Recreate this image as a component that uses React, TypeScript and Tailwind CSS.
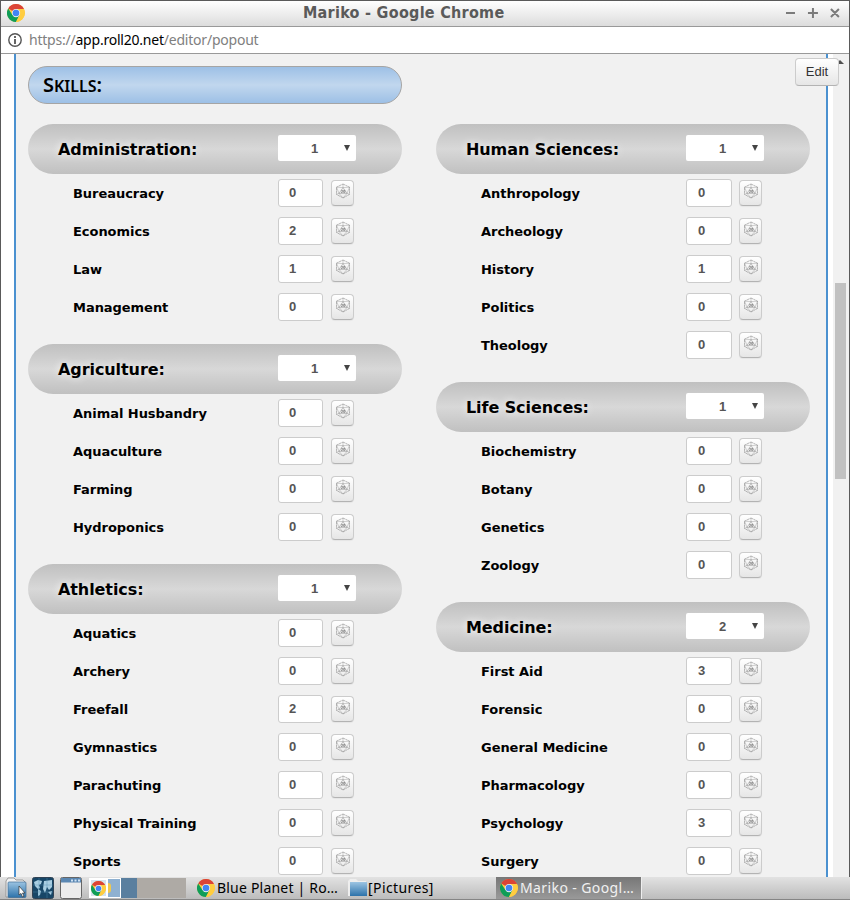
import React from "react";

type Skill = [string, number];
type Group = { name: string; level: number; skills: Skill[] };

const left: Group[] = [
  { name: "Administration:", level: 1, skills: [["Bureaucracy", 0], ["Economics", 2], ["Law", 1], ["Management", 0]] },
  { name: "Agriculture:", level: 1, skills: [["Animal Husbandry", 0], ["Aquaculture", 0], ["Farming", 0], ["Hydroponics", 0]] },
  {
    name: "Athletics:",
    level: 1,
    skills: [["Aquatics", 0], ["Archery", 0], ["Freefall", 2], ["Gymnastics", 0], ["Parachuting", 0], ["Physical Training", 0], ["Sports", 0]],
  },
];

const right: Group[] = [
  { name: "Human Sciences:", level: 1, skills: [["Anthropology", 0], ["Archeology", 0], ["History", 1], ["Politics", 0], ["Theology", 0]] },
  { name: "Life Sciences:", level: 1, skills: [["Biochemistry", 0], ["Botany", 0], ["Genetics", 0], ["Zoology", 0]] },
  {
    name: "Medicine:",
    level: 2,
    skills: [["First Aid", 3], ["Forensic", 0], ["General Medicine", 0], ["Pharmacology", 0], ["Psychology", 3], ["Surgery", 0]],
  },
];

function Chrome({ size = 18 }: { size?: number }) {
  return (
    <svg width={size} height={size} viewBox="0 0 48 48" className="block shrink-0">
      <circle cx="24" cy="24" r="24" fill="#ffcd40" />
      <path d="M24 24 3.2 12A24 24 0 0 1 44.8 12L44.8 13H24Z" fill="#db4437" />
      <path d="M3.2 12A24 24 0 0 0 24 48L33.5 29.5 24 24 14.5 29.5Z" fill="#0f9d58" />
      <path d="M24 13H44.8A24 24 0 0 1 24 48L33.5 29.5Z" fill="#ffcd40" />
      <circle cx="24" cy="24" r="11" fill="#f1f1f1" />
      <circle cx="24" cy="24" r="8.8" fill="#4285f4" />
    </svg>
  );
}

function D20() {
  return (
    <svg width="16" height="16" viewBox="0 0 16 16" className="block" fill="none" stroke="#8a8a8a" strokeWidth="0.6">
      <path d="M8 1 14.5 4.2V11.4L8 15 1.5 11.4V4.2Z" strokeDasharray="2.4 .4" />
      <path d="M8 1V4.6M14.5 4.2 8 4.6 1.5 4.2M1.5 4.2 4 10.4M14.5 4.2 12 10.4M1.5 11.4 4 10.4 8 15 12 10.4 14.5 11.4" strokeWidth=".4" />
      <path d="M8 4.6 4 10.4H12Z" strokeWidth=".5" />
      <path d="M6.2 7.4h1.3v1L6.2 9.4h1.4M8.6 7.4h1.3v2H8.6Z" stroke="#666" strokeWidth=".6" />
    </svg>
  );
}

function GroupBlock({ group, wide }: { group: Group; wide: boolean }) {
  return (
    <section className="mb-[18px]">
      <header className="flex h-[50px] items-center rounded-[25px] bg-[linear-gradient(#c0c0c0,#d8d8d8_50%,#c0c0c0)] pl-[30px]">
        <h2 className="w-[220px] pt-[2px] text-[16px] leading-[20px] font-bold tracking-[-0.08px] [text-shadow:0_0_8px_#fff]">{group.name}</h2>
        <div className="mb-[2px] flex h-[26px] w-[78px] items-center rounded-[2px] bg-white font-['Liberation_Sans',sans-serif] text-[13px] font-bold text-[#555]">
          <span className="ml-[33px] w-[7px] pt-[2px]">{group.level}</span>
          <svg width="6" height="6" viewBox="0 0 6 6" className="ml-[26px]">
            <path d="M0 0H6L3 6Z" fill="#444" />
          </svg>
        </div>
      </header>
      {group.skills.map(([name, value]) => (
        <div key={name} className="flex h-[38px] items-center pl-[45px]">
          <span className="w-[205px] pt-[2px] text-[13px] font-bold tracking-[-0.04px]">{name}</span>
          <span
            className={
              "flex h-[28px] items-center rounded-[3px] border border-[#ccc] bg-white font-['Liberation_Sans',sans-serif] text-[13px] font-bold text-[#555] " +
              (wide ? "mr-[7px] w-[46px] pl-[11px]" : "mr-[8px] w-[45px] pl-[10px]")
            }
          >
            {value}
          </span>
          <button className="flex h-[26px] w-[23px] items-start justify-center rounded-[4px] border border-[#ccc] border-b-[#b3b3b3] bg-[linear-gradient(#fff,#e6e6e6)] pt-[2px] shadow-[0_1px_1px_rgba(0,0,0,0.05)]">
            <D20 />
          </button>
        </div>
      ))}
    </section>
  );
}

function FolderIcon() {
  return (
    <svg width="22" height="22" viewBox="0 0 22 22" className="block shrink-0">
      <defs>
        <linearGradient id="folder" x1="0" y1="0" x2="0" y2="1">
          <stop offset="0" stopColor="#9cc4e2" />
          <stop offset="1" stopColor="#2c72aa" />
        </linearGradient>
      </defs>
      <path d="M1 20V4L3 1H9L11 3H18L20 5V20Z" fill="#f2f2f2" stroke="#888" strokeWidth=".8" />
      <rect x="3" y="5" width="18" height="15.5" rx="1" fill="url(#folder)" stroke="#416f95" strokeWidth=".7" />
      <path d="M14 9V18L16 16.4 17.5 20 19 19.3 17.5 16H20Z" fill="#fff" stroke="#333" strokeWidth=".7" />
    </svg>
  );
}

export default function App() {
  return (
    <div className="flex h-[900px] w-[850px] flex-col overflow-hidden bg-white font-['DejaVu_Sans',sans-serif] text-black">
      <div className="flex h-[877px] flex-col overflow-hidden border border-b-0 border-[#5a5a5a]">
        <div className="flex h-[26px] shrink-0 items-center border-b border-[#999] bg-[linear-gradient(#fff,#dcdcdc)] pr-[8px] pb-[2px] pl-[6px]">
          <Chrome />
          <div className="ml-[278px] w-[483px] font-['DejaVu_Sans_Condensed','DejaVu_Sans',sans-serif] text-[16px] leading-[20px] font-bold tracking-[0.28px] [font-stretch:condensed] whitespace-nowrap text-[#5a5a5a]">
            Mariko - Google Chrome
          </div>
          <svg width="56" height="12" viewBox="0 0 56 12" stroke="#7b7b7b" strokeWidth="2" fill="none">
            <path d="M1 6H10M23 6H33M28 1V11M46 2 54 10M54 2 46 10" />
          </svg>
        </div>
        <div className="flex h-[27px] shrink-0 items-center border-b border-[#999] bg-white pl-[7px]">
          <svg width="14" height="14" viewBox="0 0 14 14" fill="none" stroke="#555">
            <circle cx="7" cy="7" r="6.2" strokeWidth="1.4" />
            <path d="M7 6V11M7 3V5" strokeWidth="1.8" />
          </svg>
          <span className="ml-[7px] font-['Noto_Sans',sans-serif] text-[14px] leading-[20px] tracking-[-0.22px] text-[#808080]">
            https://<span className="text-black">app.roll20.net</span>/editor/popout
          </span>
        </div>
        <div className="relative flex h-[823px] overflow-hidden bg-white pl-[13px]">
          <main className="w-[814px] shrink-0 border-x-2 border-[#4b91d0] bg-[#f1f1f1] pt-[12px] pl-[12px]">
            <h1 className="mb-[20px] flex h-[38px] w-[374px] items-center rounded-[19px] border border-[#a5a5a5] bg-[linear-gradient(#9dc0e6,#c1d7ee_50%,#9dc0e6)] pl-[14px] font-['Noto_Sans',sans-serif] text-[20px] font-semibold">
              <span>
                S<span className="text-[16px]">KILLS</span>:
              </span>
            </h1>
            <div className="flex gap-[34px]">
              {[left, right].map((groups, i) => (
                <div key={i} className="w-[374px]">
                  {groups.map((g) => (
                    <GroupBlock key={g.name} group={g} wide={i === 1} />
                  ))}
                </div>
              ))}
            </div>
          </main>
          <aside className="ml-[5px] h-full w-[16px] bg-[#f1f1f1] pt-[229px] pl-[2px]">
            <div className="h-[196px] w-[11px] bg-[#c1c1c1]" />
          </aside>
          <svg width="6" height="4" viewBox="0 0 6 4" className="absolute top-[6px] left-[837px]">
            <path d="M0 4V2L2 0 6 4Z" fill="#505050" />
          </svg>
          <button className="absolute top-[4px] left-[794px] h-[28px] w-[44px] rounded-[4px] border border-[#ccc] border-b-[#b3b3b3] bg-[linear-gradient(#fff,#e6e6e6)] font-['Liberation_Sans',sans-serif] text-[13px] text-[#333]">
            Edit
          </button>
        </div>
      </div>
      <footer className="flex h-[23px] shrink-0 items-center border-b border-[#858585] bg-[linear-gradient(#e2e2e2,#bcbcbc)] pl-[5px] font-['Noto_Sans',sans-serif] text-[14px] leading-[20px] whitespace-nowrap">
        <FolderIcon />
        <svg width="22" height="22" viewBox="0 0 22 22" className="ml-[5px] shrink-0">
          <rect x=".5" y=".5" width="21" height="21" rx="2" fill="#174667" stroke="#304254" />
          <path d="M2 5 6 3 10 4 9 7 7 8 8 11 6 12 3 9ZM6 12 9 14 8 18 6 19ZM12 4 20 3 20 10 17 13 15 10 13 16 11 12ZM16 15 20 14 19 18Z" fill="#a9cee2" />
          <path d="M1 8H21M1 15H21M7 1V21M15 1V21" stroke="#5991b1" strokeWidth=".4" />
        </svg>
        <svg width="22" height="22" viewBox="0 0 22 22" className="ml-[6px] shrink-0">
          <rect x=".5" y=".5" width="21" height="21" rx="2" fill="#ececec" stroke="#666" />
          <path d="M1 1H21V5.5H1Z" fill="#5a87b2" />
          <path d="M11 3.5H13M14.5 3.5H16.5M18 3.5H20" stroke="#cfe2f3" strokeWidth="2" />
        </svg>
        <div className="ml-[7px] flex h-[20px] w-[97px] shrink-0">
          <div className="relative flex w-[48px] bg-[#5a7f9f]">
            <div className="flex w-[19px] items-center border-2 border-white bg-[#d5e2ee]">
              <Chrome size={15} />
            </div>
            <div className="flex w-[13px] items-center overflow-hidden border border-l-0 border-white bg-[#8fb1d1]">
              <div className="h-[10px] w-[3px] rounded-r-full bg-[#f2c94c]" />
            </div>
          </div>
          <div className="w-[49px] bg-[#aeaaa5]" />
        </div>
        <div className="ml-[11px] flex w-[151px] shrink-0 items-center">
          <Chrome />
          <span className="ml-[2px] tracking-[0.2px]">Blue Planet | Ro…</span>
        </div>
        <div className="flex w-[148px] shrink-0 items-center">
          <svg width="20" height="18" viewBox="0 0 20 18">
            <path d="M0 17V2L2 0H8L10 2H18V17Z" fill="#eee" />
            <rect x="2" y="3" width="17" height="14" fill="url(#folder)" />
          </svg>
          <span className="tracking-[0.4px]">[Pictures]</span>
        </div>
        <div className="flex h-[22px] w-[146px] shrink-0 items-center border-r border-[#eee] bg-[linear-gradient(#777,#999)] pl-[4px] text-[#f1f1f1]">
          <Chrome />
          <span className="ml-[2px] tracking-[0.4px]">Mariko - Googl…</span>
        </div>
      </footer>
    </div>
  );
}
